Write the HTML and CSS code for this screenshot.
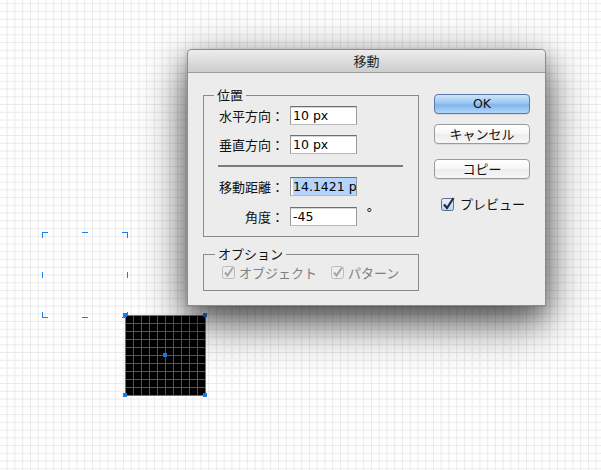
FILE: index.html
```html
<!DOCTYPE html>
<html lang="ja">
<head>
<meta charset="utf-8">
<title>移動</title>
<link rel="stylesheet" href="styles.css">
</head>
<body>
<div class="ghost">
  <i class="m tl"></i><i class="m tc"></i><i class="m tr"></i>
  <i class="m ml"></i><i class="m mr"></i>
  <i class="m bl"></i><i class="m bc"></i><i class="m br"></i>
</div>
<div class="shape">
  <i class="h h-tl"></i><i class="h h-tr"></i><i class="h h-bl"></i><i class="h h-br"></i><i class="h h-c"></i>
</div>

<div class="dialog">
  <div class="titlebar">移動</div>
  <div class="dlg-body">
    <div class="left">
      <fieldset class="group pos">
        <legend>位置</legend>
        <div class="row"><span class="lbl">水平方向：</span><div class="field">10 px</div></div>
        <div class="row"><span class="lbl">垂直方向：</span><div class="field">10 px</div></div>
        <div class="sep"></div>
        <div class="row"><span class="lbl">移動距離：</span><div class="field"><span class="sel">14.1421 p</span></div></div>
        <div class="row row-last"><span class="lbl">角度：</span><div class="field">-45</div><span class="deg">°</span></div>
      </fieldset>
      <fieldset class="group opt">
        <legend>オプション</legend>
        <div class="checks">
          <label class="chk disabled">
            <svg width="13" height="13" viewBox="0 0 13 13"><rect x="0.5" y="0.5" width="12" height="12" rx="2" fill="#ededed" stroke="#bcbcbc"/><path d="M3 6.5 L5.5 9.5 L11 1.5" fill="none" stroke="#a5a5a5" stroke-width="2"/></svg>
            <span>オブジェクト</span>
          </label>
          <label class="chk disabled">
            <svg width="13" height="13" viewBox="0 0 13 13"><rect x="0.5" y="0.5" width="12" height="12" rx="2" fill="#ededed" stroke="#bcbcbc"/><path d="M3 6.5 L5.5 9.5 L11 1.5" fill="none" stroke="#a5a5a5" stroke-width="2"/></svg>
            <span>パターン</span>
          </label>
        </div>
      </fieldset>
    </div>
    <div class="right">
      <div class="btn ok">OK</div>
      <div class="btn">キャンセル</div>
      <div class="btn copy">コピー</div>
      <label class="chk preview">
        <svg width="14" height="14" viewBox="0 0 14 14">
          <defs><linearGradient id="cb" x1="0" y1="0" x2="0" y2="1"><stop offset="0" stop-color="#eef5fd"/><stop offset="1" stop-color="#b9d3ef"/></linearGradient></defs>
          <rect x="0.5" y="1.5" width="12" height="12" rx="2" fill="url(#cb)" stroke="#5d6f8e"/>
          <path d="M3 7.5 L6 11 L12.5 1" fill="none" stroke="#1d2b4c" stroke-width="2.2"/>
        </svg>
        <span>プレビュー</span>
      </label>
    </div>
  </div>
</div>
</body>
</html>
```

FILE: styles.css
```css
html, body {
  margin: 0;
  padding: 0;
}
body {
  width: 601px;
  height: 470px;
  overflow: hidden;
  position: relative;
  background-color: #ffffff;
  background-image:
    linear-gradient(to right, #eaeaea 1px, transparent 1px),
    linear-gradient(to bottom, #eaeaea 1px, transparent 1px);
  background-size: 7.76px 7.76px;
  background-position: 6.7px 3.3px;
  font-family: "Noto Sans CJK JP", sans-serif;
  color: #1a1a1a;
}

/* ghost selection (original position) */
.ghost {
  position: absolute;
  left: 42px;
  top: 232px;
  width: 86px;
  height: 86px;
}
.m {
  position: absolute;
  display: block;
  border: 0 solid #1b80e6;
}
.tl { left: 0; top: 0; width: 5px; height: 5px; border-left-width: 1px; border-top-width: 1px; }
.tr { right: 0; top: 0; width: 5px; height: 5px; border-right-width: 1px; border-top-width: 1px; }
.bl { left: 0; bottom: 0; width: 5px; height: 5px; border-left-width: 1px; border-bottom-width: 1px; }
.br { right: 0; bottom: 0; width: 5px; height: 5px; border-right-width: 1px; border-bottom-width: 1px; }
.tc { left: 40px; top: 0; width: 6px; height: 0; border-top-width: 1px; }
.bc { left: 40px; bottom: 0; width: 6px; height: 0; border-bottom-width: 1px; }
.ml { left: 0; top: 40px; width: 0; height: 6px; border-left-width: 1px; }
.mr { right: 0; top: 40px; width: 0; height: 6px; border-right-width: 1px; }

/* moved black square */
.shape {
  position: absolute;
  left: 125px;
  top: 315px;
  width: 81px;
  height: 81px;
  box-sizing: border-box;
  border: 1px solid #2b80dc;
  background-color: #000;
  background-image:
    linear-gradient(to right, transparent 7px, #555 7px),
    linear-gradient(to bottom, transparent 7px, #555 7px);
  background-size: 8px 8px;
}
.h {
  position: absolute;
  display: block;
  width: 4px;
  height: 4px;
  background: #1a7ae0;
}
.h-tl { left: -3px; top: -3px; }
.h-tr { left: 77px; top: -3px; }
.h-bl { left: -3px; top: 77px; }
.h-br { left: 77px; top: 77px; }
.h-c  { left: 37px; top: 37px; }

/* dialog window */
.dialog {
  position: absolute;
  left: 187px;
  top: 49px;
  width: 359px;
  box-sizing: border-box;
  border: 1px solid #8c8c8c;
  border-radius: 5px 5px 0 0;
  background: #ececec;
  box-shadow:
    0 16px 50px rgba(0, 0, 0, 0.62),
    0 10px 22px rgba(0, 0, 0, 0.32),
    0 0 1px rgba(0, 0, 0, 0.3);
  z-index: 2;
}
.titlebar {
  height: 22px;
  line-height: 22px;
  text-align: center;
  font-size: 13px;
  color: #2a2a2a;
  border-bottom: 1px solid #9d9d9d;
  border-radius: 4px 4px 0 0;
  background: linear-gradient(to bottom, #ededed, #d9d9d9 60%, #cdcdcd);
}
.dlg-body {
  display: flex;
  gap: 15px;
  padding: 15px 15px 14px 15px;
}
.left {
  display: flex;
  flex-direction: column;
  width: 216px;
}
.group {
  margin: 0;
  border: 1px solid #8a8a8a;
  padding: 4px 14px 10px 14px;
  min-width: 0;
}
.group legend {
  margin-left: -4px;
  padding: 0 3px;
  font-size: 13px;
  line-height: 14px;
  color: #111;
}
.row {
  display: flex;
  align-items: center;
  height: 19px;
  gap: 6px;
}
.row + .row { margin-top: 10px; }
.row-last { margin-top: 11px !important; }
.lbl {
  width: 66px;
  text-align: right;
  font-size: 13px;
  white-space: nowrap;
  color: #111;
}
.field {
  width: 67px;
  height: 19px;
  box-sizing: border-box;
  background: #fff;
  border: 1px solid #9a9a9a;
  border-top-color: #6f6f6f;
  border-bottom-color: #b9b9b9;
  box-shadow: inset 0 1px 0 #d6d6d6;
  font-family: "DejaVu Sans", "Liberation Sans", sans-serif;
  font-size: 12.5px;
  line-height: 17px;
  padding-left: 2px;
  color: #000;
  white-space: nowrap;
  overflow: hidden;
}
.sel {
  display: inline-block;
  background: #b5d4fb;
  padding-right: 1px;
}
.deg {
  margin-left: 3px;
  font-family: "DejaVu Sans", sans-serif;
  font-size: 13px;
  align-self: flex-start;
  line-height: 12px;
}
.sep {
  height: 2px;
  margin-top: 11px;
  background: #7b7b7b;
  width: 185px;
}
.sep + .row { margin-top: 10px; }

.opt {
  margin-top: 10px;
  padding: 5px 14px 11px 18px;
}
.opt legend { margin-left: -7px; }
.checks {
  display: flex;
  gap: 14px;
  height: 13px;
  align-items: center;
}
.chk {
  display: flex;
  align-items: center;
  gap: 4px;
  font-size: 13px;
  white-space: nowrap;
}
.chk svg { flex: none; display: block; }
.chk.disabled { color: #808080; }

.right {
  display: flex;
  flex-direction: column;
  width: 96px;
  padding-top: 6px;
}
.btn {
  height: 20px;
  box-sizing: border-box;
  border: 1px solid #9b9b9b;
  border-radius: 4px;
  background: linear-gradient(to bottom, #ffffff, #f6f6f6 50%, #ececec 51%, #f7f7f7);
  box-shadow: 0 1px 0 rgba(0,0,0,0.08);
  font-size: 13px;
  line-height: 18px;
  text-align: center;
  color: #111;
}
.btn + .btn { margin-top: 10px; }
.btn.copy { margin-top: 15px; }
.btn.ok {
  border-color: #5a78a8;
  background: linear-gradient(to bottom, #cfe4fa, #9cc8f3 45%, #7fb5ee 55%, #b2d7f8);
  font-family: "DejaVu Sans", sans-serif;
  font-size: 12.5px;
}
.preview {
  margin-top: 15px;
  margin-left: 7px;
  color: #111;
  gap: 5px;
}
```
